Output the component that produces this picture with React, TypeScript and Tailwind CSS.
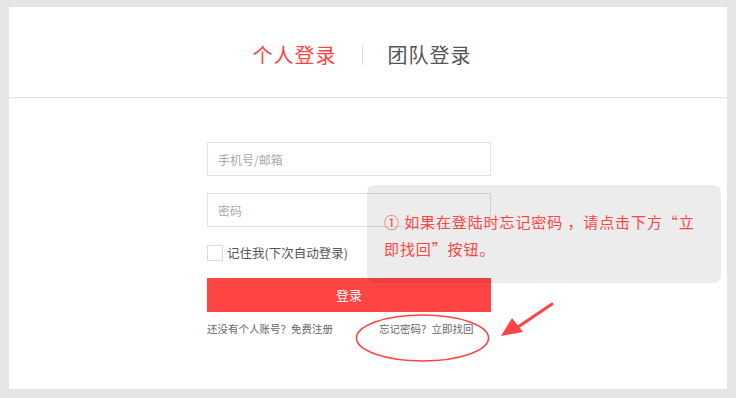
export default function App() {
  return (
    <div
      className="h-[398px] w-[736px] bg-[#e5e5e5] pl-[9px] pr-[9px] pt-[7px] pb-[9px]"
      style={{ fontFamily: '"Noto Sans CJK SC", "Noto Sans", sans-serif' }}
    >
      <div className="relative h-full w-full bg-white">
        {/* tabs */}
        <div className="flex h-[91px] items-center justify-center border-b border-[#e3e3e3] pr-[12px] pt-[6px]">
          <span className="text-[20px] leading-none tracking-[1px] text-[#ff4444]">个人登录</span>
          <span className="mx-[25px] h-[20px] w-px bg-[#dddddd]" />
          <span className="text-[20px] leading-none tracking-[1px] text-[#555555]">团队登录</span>
        </div>

        {/* form */}
        <div className="ml-[198px] mt-[44px] flex w-[284px] flex-col">
          <input
            type="text"
            placeholder="手机号/邮箱"
            className="h-[34px] w-full border border-[#e2e2e2] px-[10px] text-[12px] text-[#333] outline-none placeholder:text-[#a9a9a9]"
          />
          <input
            type="password"
            placeholder="密码"
            className="mt-[17px] h-[34px] w-full border border-[#e2e2e2] px-[10px] text-[12px] text-[#333] outline-none placeholder:text-[#a9a9a9]"
          />
          <label className="mt-[17px] flex items-center gap-[4px] text-[12.5px] text-[#555]">
            <span className="h-[16px] w-[16px] border border-[#dcdcdc] bg-white" />
            记住我(下次自动登录)
          </label>
          <button className="mt-[15px] h-[34px] w-full bg-[#ff4444] text-[13px] text-white">登录</button>
          <div className="mt-[9px] flex text-[10.5px] text-[#666]">
            <span>还没有个人账号？免费注册</span>
            <span className="ml-[46px]">忘记密码？立即找回</span>
          </div>
        </div>

        {/* tooltip */}
        <div className="absolute left-[358px] top-[178px] w-[354px] rounded-[8px] bg-black/[0.075] px-[17px] pb-[21px] pt-[23px] text-[15px] leading-[27px] tracking-[0.9px] text-[#ff4444]">
          ① 如果在登陆时忘记密码 ，请点击下方“立
          <br />
          即找回”按钮。
        </div>

        {/* annotation: ellipse and arrow */}
        <svg className="pointer-events-none absolute left-0 top-0" width="718" height="382">
          <ellipse cx="413.5" cy="331" rx="66" ry="23" fill="none" stroke="#ff4444" strokeWidth="1.6" />
          <line x1="543" y1="297" x2="506" y2="322" stroke="#ff4444" strokeWidth="3" strokeLinecap="round" />
          <polygon points="492,329 503,311 514,325" fill="#ff4444" />
        </svg>
      </div>
    </div>
  );
}
